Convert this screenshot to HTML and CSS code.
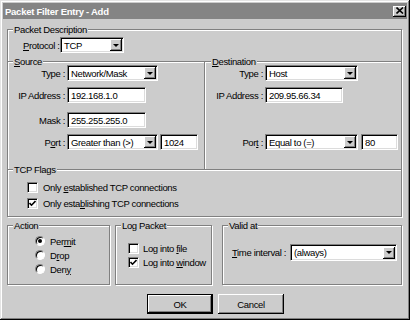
FILE: index.html
```html
<!DOCTYPE html>
<html>
<head>
<meta charset="utf-8">
<link rel="stylesheet" href="styles.css">
</head>
<body>
<div class="window">
  <div class="titlebar">
    <span class="title">Packet Filter Entry - Add</span>
    <span class="close"><svg width="8" height="7" viewBox="0 0 8 7"><path d="M0.5 0.5 L7 6.5 M7 0.5 L0.5 6.5" stroke="#000" stroke-width="1.6"/></svg></span>
  </div>
  <div class="body">
    <div class="group pd">
      <span class="legend">Packet Description</span>
      <div class="proto">
        <span class="plabel"><u>P</u>rotocol :</span>
        <div class="sel w-proto"><span class="val">TCP</span><span class="arrow"><i></i></span></div>
      </div>
      <div class="srcdst">
        <div class="col src">
          <span class="legend"><u>S</u>ource</span>
          <div class="frow r1"><span class="lab">Type :</span><div class="sel w-type"><span class="val">Network/Mask</span><span class="arrow"><i></i></span></div></div>
          <div class="frow r2"><span class="lab">IP Address :</span><div class="field w-ip">192.168.1.0</div></div>
          <div class="frow r3"><span class="lab">Mask :</span><div class="field w-ip">255.255.255.0</div></div>
          <div class="frow r4"><span class="lab">P<u>o</u>rt :</span><div class="sel w-port"><span class="val">Greater than (&gt;)</span><span class="arrow"><i></i></span></div><div class="field w-pnum">1024</div></div>
        </div>
        <div class="col dst">
          <span class="legend"><u>D</u>estination</span>
          <div class="frow r1"><span class="lab">Type :</span><div class="sel w-type2"><span class="val">Host</span><span class="arrow"><i></i></span></div></div>
          <div class="frow r2"><span class="lab">IP Address :</span><div class="field w-ip2">209.95.66.34</div></div>
          <div class="frow r3"></div>
          <div class="frow r4"><span class="lab">Por<u>t</u> :</span><div class="sel w-port2"><span class="val">Equal to (=)</span><span class="arrow"><i></i></span></div><div class="field w-pnum2">80</div></div>
        </div>
      </div>
      <div class="tcp">
        <span class="legend">TCP Flags</span>
        <div class="crow t1"><span class="cb"></span><span>Only <u>e</u>stablished TCP connections</span></div>
        <div class="crow t2"><span class="cb"><svg width="7" height="7" viewBox="0 0 7 7"><path d="M0.5 3 L2.5 5.2 L6.5 1" fill="none" stroke="#000" stroke-width="1.6"/></svg></span><span>Only esta<u>b</u>lishing TCP connections</span></div>
      </div>
    </div>
    <div class="bottomrow">
      <div class="group action">
        <span class="legend">Action</span>
        <div class="rrow"><span class="radio on"></span><span>Per<u>m</u>it</span></div>
        <div class="rrow"><span class="radio"></span><span>D<u>r</u>op</span></div>
        <div class="rrow"><span class="radio"></span><span>Den<u>y</u></span></div>
      </div>
      <div class="group log">
        <span class="legend">Log Packet</span>
        <div class="lrow"><span class="cb"></span><span>Log into <u>f</u>ile</span></div>
        <div class="lrow"><span class="cb"><svg width="7" height="7" viewBox="0 0 7 7"><path d="M0.5 3 L2.5 5.2 L6.5 1" fill="none" stroke="#000" stroke-width="1.6"/></svg></span><span>Log into <u>w</u>indow</span></div>
      </div>
      <div class="group valid">
        <span class="legend">Valid at</span>
        <div class="vrow"><span class="vlabel"><u>T</u>ime interval :</span><div class="sel w-time"><span class="val">(always)</span><span class="arrow"><i></i></span></div></div>
      </div>
    </div>
    <div class="buttons">
      <div class="btn default"><span>OK</span></div>
      <div class="btn"><span>Cancel</span></div>
    </div>
  </div>
</div>
</body>
</html>
```
FILE: styles.css
```css
* { box-sizing: border-box; }
body {
  margin: 0;
  background: #cccccc;
  font-family: "Liberation Sans", Arial, sans-serif;
  font-size: 9.5px;
  letter-spacing: -0.35px;
  color: #000;
}
u { text-decoration: underline; text-underline-offset: 1px; }

.window {
  width: 410px;
  height: 320px;
  padding: 3px;
  background: #cccccc;
  box-shadow: inset -1px -1px 0 #000, inset 1px 1px 0 #e4e4e4, inset -2px -2px 0 #808080, inset 2px 2px 0 #fff;
  display: flex;
  flex-direction: column;
}

.titlebar {
  height: 16px;
  background: #848484;
  display: flex;
  align-items: center;
  justify-content: space-between;
  padding: 0 1px 0 2px;
}
.title {
  color: #fff;
  font-weight: bold;
  font-size: 9.5px;
  letter-spacing: -0.25px;
}
.close {
  width: 13px;
  height: 11px;
  background: #cccccc;
  box-shadow: inset -1px -1px 0 #000, inset 1px 1px 0 #fff, inset -2px -2px 0 #808080;
  display: flex;
  align-items: center;
  justify-content: center;
  padding-bottom: 1px;
}

.body { padding-left: 4px; }

.group {
  position: relative;
  border: 1px solid #808080;
  box-shadow: inset 1px 1px 0 #fff, 1px 1px 0 #fff;
}
.legend {
  position: absolute;
  top: -6px;
  left: 5px;
  padding: 0 1px;
  line-height: 11px;
  height: 11px;
  background: #cccccc;
  white-space: nowrap;
}

.pd {
  margin-top: 10px;
  width: 395px;
  height: 188px;
}

.proto {
  margin-top: 7px;
  padding-left: 15px;
  display: flex;
  align-items: center;
  height: 16px;
}
.plabel { width: 35px; text-align: right; margin-right: 2px; white-space: nowrap; }

/* sunken controls */
.sel, .field {
  height: 16px;
  background: #fff;
  border: 1px solid;
  border-color: #808080 #fff #fff #808080;
  box-shadow: inset 1px 1px 0 #000, inset -1px -1px 0 #dcdcdc;
  display: flex;
  align-items: center;
  white-space: nowrap;
  overflow: hidden;
}
.field { padding-left: 3px; }
.sel .val { flex: 1; padding-left: 3px; overflow: hidden; }
.sel .arrow {
  width: 12px;
  height: 12px;
  margin-right: 1px;
  background: #cccccc;
  box-shadow: inset -1px -1px 0 #000, inset 1px 1px 0 #fff, inset -2px -2px 0 #808080;
  display: flex;
  align-items: center;
  justify-content: center;
}
.sel .arrow i {
  display: block;
  width: 0;
  height: 0;
  border-left: 3px solid transparent;
  border-right: 3px solid transparent;
  border-top: 3px solid #000;
  margin-right: 1px;
}

.w-proto { width: 64px; }
.w-type { width: 91px; }
.w-type2 { width: 93px; }
.w-ip { width: 79px; }
.w-ip2 { width: 78px; }
.w-port { width: 91px; }
.w-port2 { width: 93px; }
.w-pnum { width: 38px; margin-left: 2px; }
.w-pnum2 { width: 37px; margin-left: 3px; }
.w-time { width: 107px; height: 17px; }

.srcdst {
  margin-top: 8px;
  height: 109px;
  border-top: 1px solid #808080;
  border-bottom: 1px solid #808080;
  box-shadow: inset 0 1px 0 #fff, 0 1px 0 #fff;
  display: flex;
}
.col { position: relative; padding-top: 3px; }
.src { width: 197px; border-right: 1px solid #808080; }
.dst { flex: 1; box-shadow: inset 1px 0 0 #fff; }
.src .legend { left: 5px; }
.dst .legend { left: 6px; }

.frow { display: flex; align-items: center; height: 16px; }
.frow .lab { text-align: right; margin-right: 2px; white-space: nowrap; }
.src .lab { width: 57px; }
.dst .lab { width: 58px; }
.r2 { margin-top: 6px; }
.r3 { margin-top: 9px; }
.r4 { margin-top: 6px; }

.tcp { position: relative; height: 46px; padding-top: 11px; padding-left: 19px; }
.crow { display: flex; align-items: center; height: 13px; }
.t2 { margin-top: 3px; }

.cb {
  width: 11px;
  height: 11px;
  background: #fff;
  border: 1px solid;
  border-color: #808080 #fff #fff #808080;
  box-shadow: inset 1px 1px 0 #000, inset -1px -1px 0 #dcdcdc;
  display: flex;
  align-items: center;
  justify-content: center;
  margin-right: 5px;
  flex: none;
}

.bottomrow { display: flex; margin-top: 8px; }
.action { width: 103px; height: 60px; padding-top: 8px; padding-left: 27px; }
.log { width: 97px; height: 60px; margin-left: 5px; padding-top: 15px; padding-left: 12px; }
.valid { width: 180px; height: 60px; margin-left: 10px; padding-top: 18px; padding-left: 9px; }

.rrow { display: flex; align-items: center; height: 14px; }
.radio {
  width: 10px;
  height: 10px;
  border-radius: 50%;
  background: #fff;
  border: 1px solid;
  border-color: #808080 #fff #fff #808080;
  box-shadow: inset 1px 1px 0 #000;
  margin-right: 5px;
  display: flex;
  align-items: center;
  justify-content: center;
  flex: none;
}
.radio.on::after {
  content: "";
  width: 4px;
  height: 4px;
  border-radius: 50%;
  background: #000;
}

.lrow { display: flex; align-items: center; height: 14px; }
.lrow .cb { margin-right: 4px; }

.vrow { display: flex; align-items: center; height: 17px; }
.vlabel { width: 58px; white-space: nowrap; }

.buttons { display: flex; margin-top: 9px; padding-left: 140px; gap: 5px; }
.btn {
  width: 66px;
  height: 20px;
  background: #cccccc;
  box-shadow: inset -1px -1px 0 #000, inset 1px 1px 0 #fff, inset -2px -2px 0 #808080;
  display: flex;
  align-items: center;
  justify-content: center;
}
.btn.default {
  border: 1px solid #000;
}
```
